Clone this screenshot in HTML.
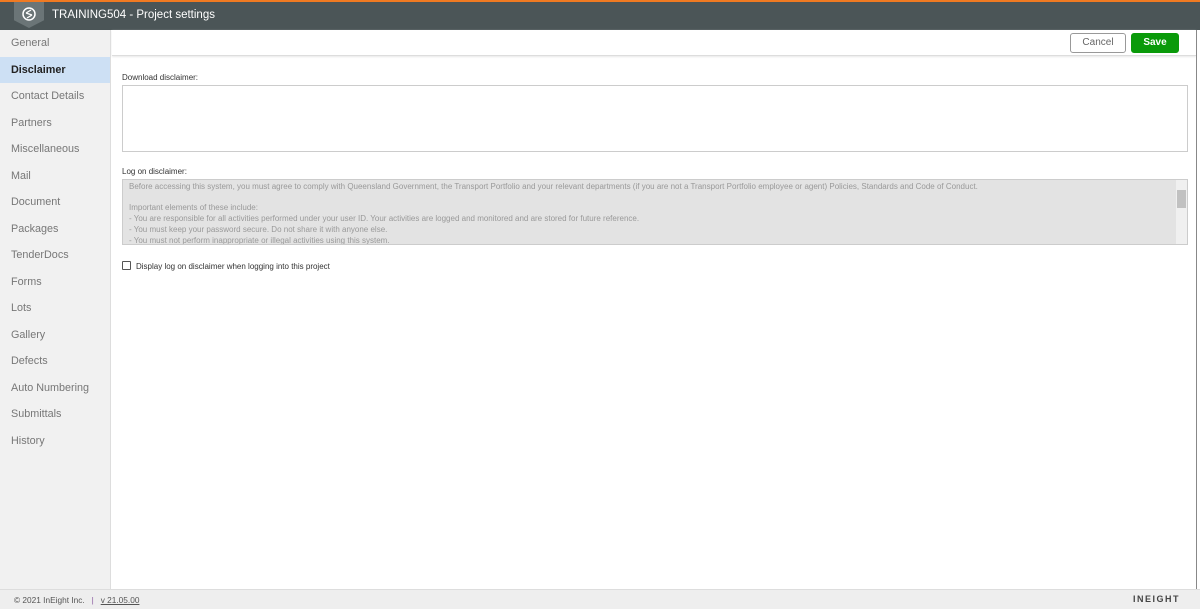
<!DOCTYPE html>
<html><head><style>
*{margin:0;padding:0;box-sizing:border-box}
body{width:1200px;height:609px;overflow:hidden;font-family:"Liberation Sans",sans-serif;background:#fff;position:relative}
.top{position:absolute;left:0;top:0;width:1200px;height:2px;background:#f07a22}
.hdr{position:absolute;left:0;top:2px;width:1200px;height:28px;background:#4b5557;color:#fff;font-size:11.5px}
.logo{position:absolute;left:14px;top:0;width:30px;height:26px;background:#6b7577;clip-path:polygon(0 0,100% 0,100% 70%,50% 100%,0 70%)}
.hdr .t{position:absolute;left:52px;top:7px}
.side{position:absolute;left:0;top:30px;width:111px;height:559px;background:#f1f1f1;border-right:1px solid #ddd}
.side div{height:26.5px;line-height:26px;padding-left:11px;font-size:10.8px;color:#777}
.side .a{background:#cde0f4;color:#222;font-weight:bold}
.tb{position:absolute;left:112px;top:30px;width:1084px;height:26px;border-bottom:1px solid #ddd;box-shadow:0 1px 2px #e8e8e8}
.btn{position:absolute;top:3px;height:20px;border-radius:3px;font-size:10px;text-align:center;line-height:18px}
.c{left:958px;width:56px;border:1px solid #999;color:#666;background:#fff}
.s{left:1019px;width:48px;background:#0a9a0a;color:#fff;font-weight:bold;border:1px solid #0a9a0a}
.lbl{position:absolute;left:122px;font-size:8px;color:#333}
.ta{position:absolute;left:122px;width:1066px;border:1px solid #ccc}
.log{background:#e3e3e3;color:#999;font-size:8px;line-height:10.7px;padding:2px 6px;overflow:hidden}
.rl{position:absolute;left:1196px;top:30px;width:1px;height:559px;background:#888}
.foot{position:absolute;left:0;top:589px;width:1200px;height:20px;background:#eee;border-top:1px solid #ddd;font-size:8.3px;color:#555}
</style></head><body>
<div class="top"></div>
<div class="hdr"><div class="logo"></div><svg style="position:absolute;left:21px;top:4px" width="16" height="16" viewBox="0 0 16 16"><circle cx="8" cy="8" r="6" fill="none" stroke="#fff" stroke-width="1.5"/><path d="M5 7l5-3M6 12l5-3M5 7l6 2" stroke="#fff" stroke-width="1.3" fill="none"/></svg><span class="t">TRAINING504 - Project settings</span></div>
<div class="side">
<div>General</div><div class="a">Disclaimer</div><div>Contact Details</div><div>Partners</div><div>Miscellaneous</div><div>Mail</div><div>Document</div><div>Packages</div><div>TenderDocs</div><div>Forms</div><div>Lots</div><div>Gallery</div><div>Defects</div><div>Auto Numbering</div><div>Submittals</div><div>History</div>
</div>
<div class="tb"><div class="btn c">Cancel</div><div class="btn s">Save</div></div>
<div class="lbl" style="top:73px">Download disclaimer:</div>
<div class="ta" style="top:85px;height:67px"></div>
<div class="lbl" style="top:167px">Log on disclaimer:</div>
<div class="ta log" style="top:179px;height:66px">Before accessing this system, you must agree to comply with Queensland Government, the Transport Portfolio and your relevant departments (if you are not a Transport Portfolio employee or agent) Policies, Standards and Code of Conduct.<br><br>Important elements of these include:<br>- You are responsible for all activities performed under your user ID. Your activities are logged and monitored and are stored for future reference.<br>- You must keep your password secure. Do not share it with anyone else.<br>- You must not perform inappropriate or illegal activities using this system.</div>
<div style="position:absolute;left:1176px;top:180px;width:11px;height:64px;background:#f0f0f0"><div style="margin:10px 1px 0;height:18px;background:#c1c1c1"></div></div>
<div style="position:absolute;left:122px;top:261px;width:9px;height:9px;border:1px solid #555;border-radius:1px"></div>
<div class="lbl" style="left:136px;top:262px">Display log on disclaimer when logging into this project</div>
<div class="rl"></div>
<div class="foot"><span style="position:absolute;left:14px;top:5px">© 2021 InEight Inc. &nbsp;&nbsp;<span style="color:#8a5aa0">|</span>&nbsp;&nbsp; <u>v 21.05.00</u></span><span style="position:absolute;left:1133px;top:4px;font-weight:bold;letter-spacing:1.5px;font-size:9px;color:#444">INEIGHT</span></div>
</body></html>
